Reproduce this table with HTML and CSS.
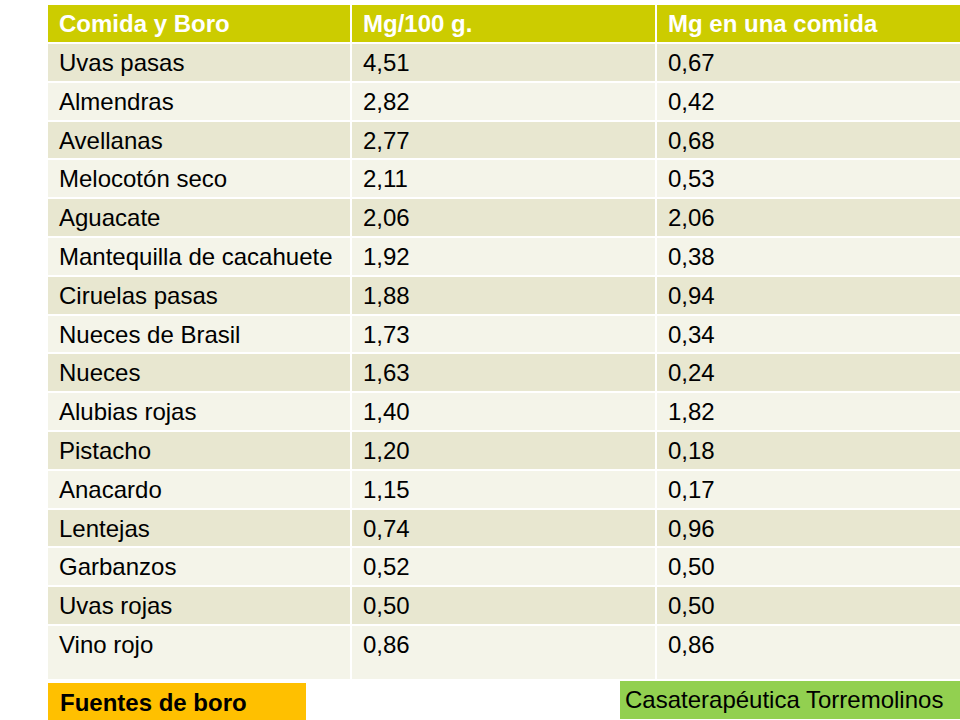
FILE: index.html
```html
<!DOCTYPE html>
<html lang="es">
<head>
<meta charset="utf-8">
<title>Fuentes de boro</title>
<link rel="stylesheet" href="styles.css">
</head>
<body>
<div class="slide">
  <div class="table">
    <div class="cell head">Comida y Boro</div><div class="cell head">Mg/100 g.</div><div class="cell head">Mg en una comida</div>
    <div class="cell dark">Uvas pasas</div><div class="cell dark">4,51</div><div class="cell dark">0,67</div>
    <div class="cell light">Almendras</div><div class="cell light">2,82</div><div class="cell light">0,42</div>
    <div class="cell dark">Avellanas</div><div class="cell dark">2,77</div><div class="cell dark">0,68</div>
    <div class="cell light">Melocotón seco</div><div class="cell light">2,11</div><div class="cell light">0,53</div>
    <div class="cell dark">Aguacate</div><div class="cell dark">2,06</div><div class="cell dark">2,06</div>
    <div class="cell light">Mantequilla de cacahuete</div><div class="cell light">1,92</div><div class="cell light">0,38</div>
    <div class="cell dark">Ciruelas pasas</div><div class="cell dark">1,88</div><div class="cell dark">0,94</div>
    <div class="cell light">Nueces de Brasil</div><div class="cell light">1,73</div><div class="cell light">0,34</div>
    <div class="cell dark">Nueces</div><div class="cell dark">1,63</div><div class="cell dark">0,24</div>
    <div class="cell light">Alubias rojas</div><div class="cell light">1,40</div><div class="cell light">1,82</div>
    <div class="cell dark">Pistacho</div><div class="cell dark">1,20</div><div class="cell dark">0,18</div>
    <div class="cell light">Anacardo</div><div class="cell light">1,15</div><div class="cell light">0,17</div>
    <div class="cell dark">Lentejas</div><div class="cell dark">0,74</div><div class="cell dark">0,96</div>
    <div class="cell light">Garbanzos</div><div class="cell light">0,52</div><div class="cell light">0,50</div>
    <div class="cell dark">Uvas rojas</div><div class="cell dark">0,50</div><div class="cell dark">0,50</div>
    <div class="cell light">Vino rojo</div><div class="cell light">0,86</div><div class="cell light">0,86</div>
  </div>
  <div class="footer">
    <div class="tag orange">Fuentes de boro</div>
    <div class="tag green">Casaterapéutica Torremolinos</div>
  </div>
</div>
</body>
</html>
```

FILE: styles.css
```css
html, body {
  margin: 0;
  padding: 0;
  background: #ffffff;
}

body {
  font-family: "Liberation Sans", Arial, sans-serif;
  color: #000000;
  width: 960px;
  height: 720px;
  overflow: hidden;
}

.slide {
  padding: 5px 0 0 48px;
}

.table {
  display: grid;
  grid-template-columns: 302px 303px 303px;
  grid-template-rows: 37px repeat(15, 36.8px) 53px;
  column-gap: 2px;
  row-gap: 2px;
}

.cell {
  font-size: 24px;
  line-height: 27px;
  padding: 5px 0 0 11px;
  white-space: nowrap;
}

.head {
  background: #cccc00;
  color: #ffffff;
  font-weight: bold;
}

.dark {
  background: #e8e7d0;
}

.light {
  background: #f4f4e9;
}

.footer {
  display: flex;
  justify-content: space-between;
  align-items: flex-start;
}

.tag {
  font-size: 24px;
  line-height: 27px;
  box-sizing: border-box;
}

.orange {
  background: #ffc000;
  font-weight: bold;
  width: 258px;
  height: 37px;
  margin-top: 4px;
  padding: 6px 0 0 12px;
}

.green {
  background: #92d050;
  width: 340px;
  height: 38px;
  margin-top: 2px;
  padding: 5px 0 0 5px;
}
```
